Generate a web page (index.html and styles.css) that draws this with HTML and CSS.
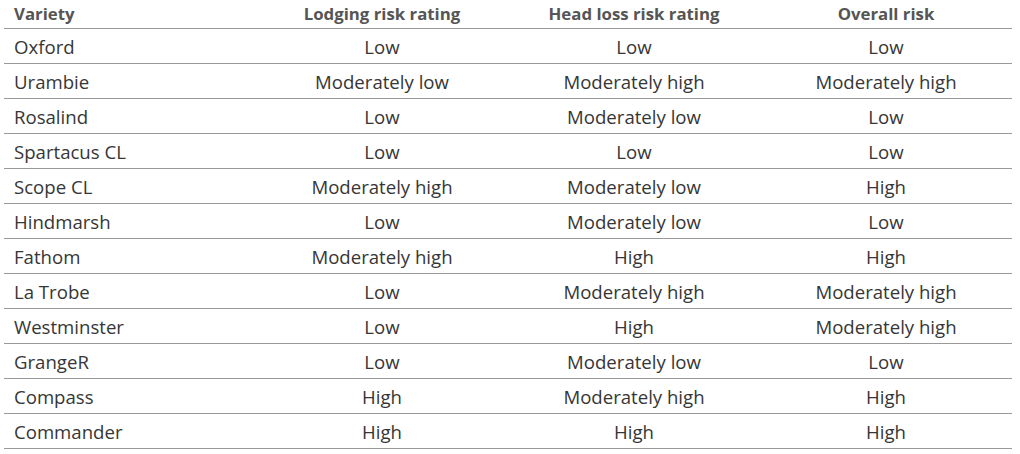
FILE: index.html
```html
<!DOCTYPE html>
<html lang="en">
<head>
<meta charset="utf-8">
<title>Variety risk ratings</title>
<link rel="stylesheet" href="styles.css">
</head>
<body>
<div class="wrap">
<table class="risk">
<colgroup>
<col class="c-first"><col class="c-data"><col class="c-data"><col class="c-data">
</colgroup>
<thead>
<tr><th class="first">Variety</th><th>Lodging risk rating</th><th>Head loss risk rating</th><th>Overall risk</th></tr>
</thead>
<tbody>
<tr><td class="first">Oxford</td><td>Low</td><td>Low</td><td>Low</td></tr>
<tr><td class="first">Urambie</td><td>Moderately low</td><td>Moderately high</td><td>Moderately high</td></tr>
<tr><td class="first">Rosalind</td><td>Low</td><td>Moderately low</td><td>Low</td></tr>
<tr><td class="first">Spartacus CL</td><td>Low</td><td>Low</td><td>Low</td></tr>
<tr><td class="first">Scope CL</td><td>Moderately high</td><td>Moderately low</td><td>High</td></tr>
<tr><td class="first">Hindmarsh</td><td>Low</td><td>Moderately low</td><td>Low</td></tr>
<tr><td class="first">Fathom</td><td>Moderately high</td><td>High</td><td>High</td></tr>
<tr><td class="first">La Trobe</td><td>Low</td><td>Moderately high</td><td>Moderately high</td></tr>
<tr><td class="first">Westminster</td><td>Low</td><td>High</td><td>Moderately high</td></tr>
<tr><td class="first">GrangeR</td><td>Low</td><td>Moderately low</td><td>Low</td></tr>
<tr><td class="first">Compass</td><td>High</td><td>Moderately high</td><td>High</td></tr>
<tr><td class="first">Commander</td><td>High</td><td>High</td><td>High</td></tr>
</tbody>
</table>
</div>
</body>
</html>
```

FILE: styles.css
```css
html, body {
  margin: 0;
  padding: 0;
  background: #ffffff;
}
.wrap {
  padding: 0 8px 0 4px;
}
.risk {
  width: 1008px;
  border-collapse: collapse;
  table-layout: fixed;
  font-family: "Open Sans", "Noto Sans", sans-serif;
}
.c-first, .c-data {
  width: 252px;
}
.risk th, .risk td {
  padding: 0;
  text-align: center;
  border-bottom: 1px solid #999999;
  white-space: nowrap;
}
.risk th {
  height: 27px;
  font-size: 16.8px;
  font-weight: 700;
  color: #555555;
  vertical-align: middle;
  padding-bottom: 1px;
}
.risk td {
  height: 34px;
  font-size: 18.6px;
  font-weight: 400;
  color: #363636;
}
.risk .first {
  text-align: left;
  padding-left: 10px;
}
```
